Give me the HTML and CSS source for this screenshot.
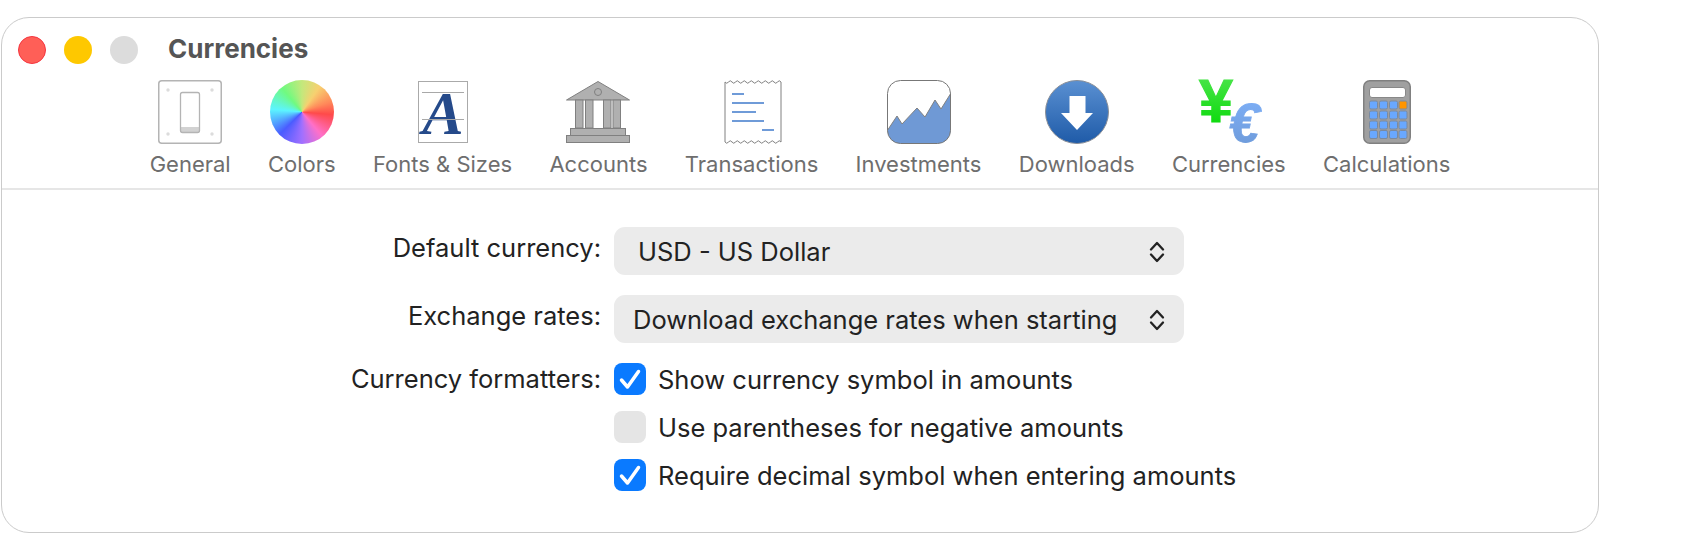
FILE: index.html
```html
<!DOCTYPE html>
<html lang="en">
<head>
<meta charset="utf-8">
<title>Currencies</title>
<link rel="stylesheet" href="styles.css">
</head>
<body>
<div class="window">
  <header class="titlebar">
    <div class="lights">
      <span class="light red"></span>
      <span class="light yellow"></span>
      <span class="light gray"></span>
    </div>
    <h1 class="title">Currencies</h1>
  </header>
  <nav class="toolbar">
    <div class="tool">
      <svg class="icon" viewBox="0 0 64 64"><rect x=".75" y=".75" width="62.5" height="62.5" rx="3" fill="#fff" stroke="#b4b4b4" stroke-width="1.5"/><circle cx="10" cy="10" r="1.7" fill="#dcdcdc"/><circle cx="54" cy="10" r="1.7" fill="#dcdcdc"/><circle cx="10" cy="54" r="1.7" fill="#dcdcdc"/><circle cx="54" cy="54" r="1.7" fill="#dcdcdc"/><path d="M22.5 47h19v4a1.500 1.500 0 0 1-1.500 1.500H24a1.500 1.500 0 0 1-1.500-1.500z" fill="#d2d2d2"/><rect x="22.500" y="12.500" width="19" height="40" rx="2" fill="none" stroke="#b4b4b4" stroke-width="1.300"/></svg>
      <span class="tool-label">General</span>
    </div>
    <div class="tool">
      <div class="wheel"></div>
      <span class="tool-label">Colors</span>
    </div>
    <div class="tool">
      <svg class="icon" viewBox="0 0 64 64"><rect x="7.500" y="1.500" width="49" height="61" fill="#fff" stroke="#aaa"/><text class="glyph-a" x="32" y="54" text-anchor="middle">A</text><path d="M11 12.500h42M11 39.500h42" stroke="#a8a8a8" stroke-width="1"/></svg>
      <span class="tool-label">Fonts &amp; Sizes</span>
    </div>
    <div class="tool">
      <svg class="icon" viewBox="0 0 64 64"><g fill="#b0b0b0" stroke="#808080"><path d="M32 1.500 63.500 20H.5z"/><circle cx="32" cy="12" r="3.500"/><rect x="9.500" y="20" width="7.500" height="28"/><rect x="19.500" y="20" width="7.500" height="28"/><rect x="37.500" y="20" width="7.500" height="28"/><rect x="47" y="20" width="7.500" height="28"/><rect x="4.500" y="48.500" width="55" height="7"/><rect x=".5" y="55.500" width="63" height="7"/></g></svg>
      <span class="tool-label">Accounts</span>
    </div>
    <div class="tool">
      <svg class="icon" viewBox="0 0 64 64"><path d="M5 2q1.750 2.500 3.500 0t3.500 0 3.500 0 3.500 0 3.500 0 3.500 0 3.500 0 3.500 0 3.500 0 3.500 0 3.500 0 3.500 0 3.500 0 3.500 0 3.500 0 3.500 0V62q-1.750-2.500-3.500 0t-3.500 0-3.500 0-3.500 0-3.500 0-3.500 0-3.500 0-3.500 0-3.500 0-3.500 0-3.500 0-3.500 0-3.500 0-3.500 0-3.500 0-3.500 0z" fill="#fff" stroke="#808080"/><path d="M12 14h12M12 23h32M12 32h24M12 41h32M42 50h12" stroke="#6f9bd8" stroke-width="2"/></svg>
      <span class="tool-label">Transactions</span>
    </div>
    <div class="tool">
      <svg class="icon" viewBox="0 0 64 64"><defs><clipPath id="inv"><rect x=".5" y=".5" width="63" height="63" rx="13"/></clipPath></defs><rect x=".5" y=".5" width="63" height="63" rx="13" fill="#fff"/><path clip-path="url(#inv)" d="M0 51 10 36l5 8 15-16 8 9 10-17 6 9 10-16v52H0z" fill="#6f99d5" stroke="#808080"/><rect x=".5" y=".5" width="63" height="63" rx="13" fill="none" stroke="#777"/></svg>
      <span class="tool-label">Investments</span>
    </div>
    <div class="tool">
      <svg class="icon" viewBox="0 0 64 64"><defs><linearGradient id="dl" x1="0" y1="0" x2="0" y2="1"><stop offset="0" stop-color="#5a90d2"/><stop offset="1" stop-color="#1f5ba8"/></linearGradient></defs><circle cx="32" cy="32" r="31.500" fill="url(#dl)" stroke="#8a8f98"/><path d="M24.500 16h16v17H48L32 50 16 33h8.500z" fill="#fff"/></svg>
      <span class="tool-label">Downloads</span>
    </div>
    <div class="tool">
      <svg class="icon" viewBox="0 0 64 64"><defs><linearGradient id="yen" x1="0" y1="0" x2="0" y2="1"><stop offset="0" stop-color="#55e655"/><stop offset="1" stop-color="#00d800"/></linearGradient><linearGradient id="eur" x1="0" y1="0" x2="0" y2="1"><stop offset="0" stop-color="#7fb1fa"/><stop offset="1" stop-color="#6c98d6"/></linearGradient></defs><text class="glyph-yen" x="2" y="42" fill="url(#yen)" stroke="url(#yen)">¥</text><text class="glyph-eur" x="32" y="62" fill="url(#eur)" stroke="url(#eur)">€</text></svg>
      <span class="tool-label">Currencies</span>
    </div>
    <div class="tool">
      <svg class="icon" viewBox="0 0 64 64"><rect x="8.750" y=".75" width="46.500" height="62.500" rx="6" fill="#a0a0a0" stroke="#808080" stroke-width="1.500"/><rect x="14.500" y="7.500" width="36" height="10" rx="2.500" fill="#fff" stroke="#888"/><g fill="#69a8ff" stroke="#7a8aa0"><rect x="14.500" y="21" width="8" height="8" rx="1.500"/><rect x="24.500" y="21" width="8" height="8" rx="1.500"/><rect x="34.500" y="21" width="8" height="8" rx="1.500"/><rect x="44" y="21" width="8" height="8" rx="1.500" fill="#ff9500"/><rect x="14.500" y="31" width="8" height="8" rx="1.500"/><rect x="24.500" y="31" width="8" height="8" rx="1.500"/><rect x="34.500" y="31" width="8" height="8" rx="1.500"/><rect x="44" y="31" width="8" height="8" rx="1.500"/><rect x="14.500" y="41" width="8" height="8" rx="1.500"/><rect x="24.500" y="41" width="8" height="8" rx="1.500"/><rect x="34.500" y="41" width="8" height="8" rx="1.500"/><rect x="44" y="41" width="8" height="8" rx="1.500"/><rect x="14.500" y="50.500" width="8" height="8" rx="1.500"/><rect x="24.500" y="50.500" width="8" height="8" rx="1.500"/><rect x="34.500" y="50.500" width="8" height="8" rx="1.500"/><rect x="44" y="50.500" width="8" height="8" rx="1.500"/></g></svg>
      <span class="tool-label">Calculations</span>
    </div>
  </nav>
  <main class="form">
    <div class="field-label field-label-select">Default currency:</div>
    <div class="select select-usd"><span>USD - US Dollar</span><svg class="chevrons" viewBox="0 0 16 22"><path d="M2 8.500 8 2l6 6.500M2 13.500 8 20l6-6.500" fill="none" stroke="#222" stroke-width="2.300" stroke-linecap="round" stroke-linejoin="round"/></svg></div>
    <div class="field-label field-label-select">Exchange rates:</div>
    <div class="select"><span>Download exchange rates when starting</span><svg class="chevrons" viewBox="0 0 16 22"><path d="M2 8.500 8 2l6 6.500M2 13.500 8 20l6-6.500" fill="none" stroke="#222" stroke-width="2.300" stroke-linecap="round" stroke-linejoin="round"/></svg></div>
    <div class="field-label field-label-check">Currency formatters:</div>
    <div class="checks">
      <div class="check-row"><span class="box on"><svg viewBox="0 0 32 32"><path d="M7.500 17 13.500 24 24.500 8.500" fill="none" stroke="#fff" stroke-width="3.500" stroke-linecap="round" stroke-linejoin="round"/></svg></span><span class="check-text">Show currency symbol in amounts</span></div>
      <div class="check-row"><span class="box"></span><span class="check-text">Use parentheses for negative amounts</span></div>
      <div class="check-row"><span class="box on"><svg viewBox="0 0 32 32"><path d="M7.500 17 13.500 24 24.500 8.500" fill="none" stroke="#fff" stroke-width="3.500" stroke-linecap="round" stroke-linejoin="round"/></svg></span><span class="check-text">Require decimal symbol when entering amounts</span></div>
    </div>
  </main>
</div>
</body>
</html>
```
FILE: styles.css
```css
* { box-sizing: border-box; }
html, body { margin: 0; padding: 0; background: #fff; }
body { font-family: Inter, "Liberation Sans", sans-serif; color: #222; height: 550px; overflow: hidden; }

.window {
  width: 1598px;
  height: 516px;
  margin: 17px 0 0 1px;
  border: 1.5px solid #cbcbcb;
  border-radius: 28px;
  background: #fff;
  display: flex;
  flex-direction: column;
}

.titlebar {
  display: flex;
  align-items: center;
  height: 62px;
  padding: 14px 0 14px 16px;
}
.lights { display: flex; gap: 18px; margin-top: 2px; }
.light { width: 28px; height: 28px; border-radius: 50%; }
.red { background: #ff5f57; border: 1px solid #f5353f; }
.yellow { background: #fec800; }
.gray { background: #dcdcdc; }
.title {
  margin: 0 0 0 30px;
  font-size: 26px;
  line-height: 30px;
  font-weight: 700;
  color: #555;
}

.toolbar {
  display: flex;
  justify-content: center;
  gap: 37.3px;
  height: 110px;
  border-bottom: 2px solid #e6e6e6;
}
.tool { display: flex; flex-direction: column; align-items: center; }
.icon { display: block; width: 64px; height: 64px; overflow: visible; }
.wheel {
  width: 64px;
  height: 64px;
  border-radius: 50%;
  background: conic-gradient(#c4e87c, #f7d070 35deg, #ff8a5a 70deg, #ff4a4a 95deg, #ff70c8 140deg, #a070ff 180deg, #4a5cff 225deg, #5cf4ff 275deg, #70fa80 320deg, #c4e87c);
}
.tool-label {
  margin-top: 7px;
  font-size: 22px;
  line-height: 26px;
  color: #6e6e6e;
  white-space: nowrap;
}
.glyph-a { font: italic 700 62px "Liberation Serif", serif; fill: #254a8a; }
.glyph-yen { font: 700 61px "Liberation Sans", sans-serif; stroke-width: 1.2; }
.glyph-eur { font: italic 700 55px "Liberation Sans", sans-serif; stroke-width: .8; }

.form {
  display: grid;
  grid-template-columns: 599px 570px;
  column-gap: 13px;
  row-gap: 20px;
  padding-top: 37px;
  font-size: 25.5px;
  line-height: 32px;
}
.field-label { text-align: right; white-space: nowrap; }
.field-label-select { padding-top: 5px; }
.select {
  height: 48px;
  border-radius: 11px;
  background: #ebebeb;
  display: flex;
  align-items: center;
  justify-content: space-between;
  padding: 2px 19px 0 19px;
  white-space: nowrap;
}
.select-usd { padding-left: 24px; }
.chevrons { width: 16px; height: 22px; flex: none; }
.checks { display: flex; flex-direction: column; gap: 16px; }
.check-row { display: flex; align-items: center; gap: 12px; height: 32px; white-space: nowrap; }
.check-text { padding-top: 2px; }
.box { width: 32px; height: 32px; border-radius: 8px; background: #e5e5e5; flex: none; }
.box.on { background: #0a7aff; }
.box svg { display: block; width: 32px; height: 32px; }
```
